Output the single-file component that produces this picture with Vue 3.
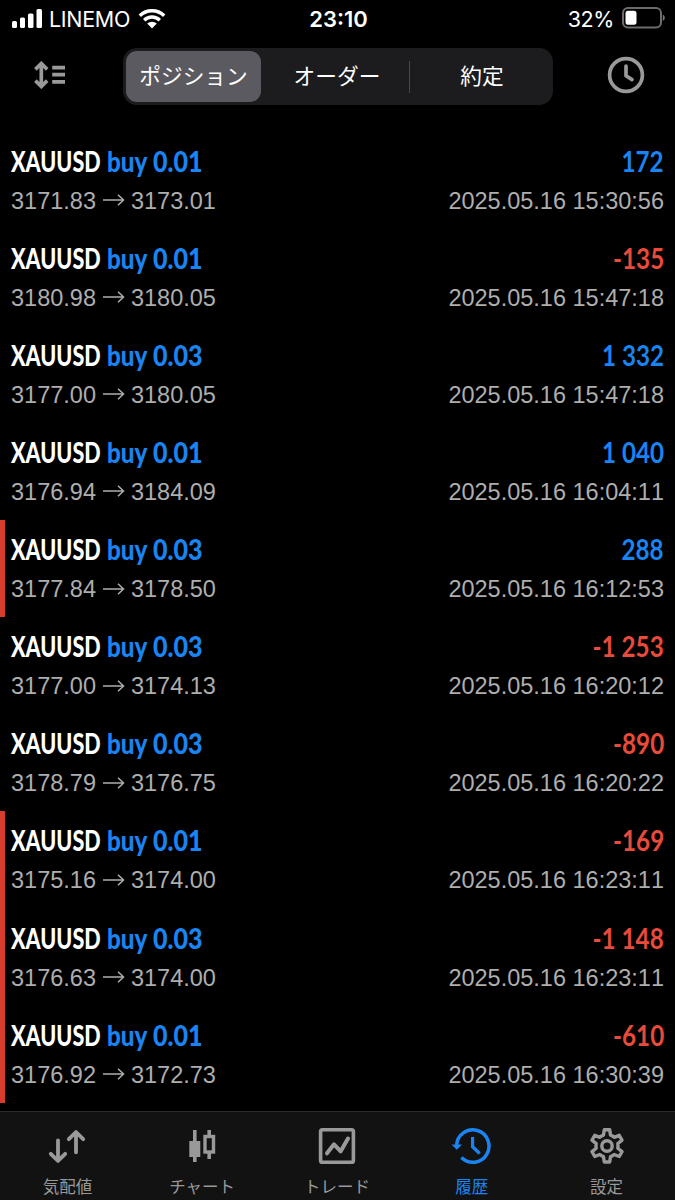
<script setup>
import { ref } from "vue";

const segments = ["ポジション", "オーダー", "約定"];
const activeSegment = ref(0);

const tabs = [
  { id: "quotes", label: "気配値" },
  { id: "chart", label: "チャート" },
  { id: "trade", label: "トレード" },
  { id: "history", label: "履歴" },
  { id: "settings", label: "設定" },
];
const activeTab = ref("history");

const positions = [
  { volume: "0.01", open: "3171.83", close: "3173.01", profit: "172", time: "15:30:56" },
  { volume: "0.01", open: "3180.98", close: "3180.05", profit: "-135", time: "15:47:18" },
  { volume: "0.03", open: "3177.00", close: "3180.05", profit: "1 332", time: "15:47:18" },
  { volume: "0.01", open: "3176.94", close: "3184.09", profit: "1 040", time: "16:04:11" },
  { volume: "0.03", open: "3177.84", close: "3178.50", profit: "288", time: "16:12:53", marked: true },
  { volume: "0.03", open: "3177.00", close: "3174.13", profit: "-1 253", time: "16:20:12" },
  { volume: "0.03", open: "3178.79", close: "3176.75", profit: "-890", time: "16:20:22" },
  { volume: "0.01", open: "3175.16", close: "3174.00", profit: "-169", time: "16:23:11", marked: true },
  { volume: "0.03", open: "3176.63", close: "3174.00", profit: "-1 148", time: "16:23:11", marked: true },
  { volume: "0.01", open: "3176.92", close: "3172.73", profit: "-610", time: "16:30:39", marked: true },
];
</script>

<template>
  <div class="app">
    <header class="status">
      <div class="status-left">
        <svg class="signal" width="30" height="19" viewBox="0 0 30 19">
          <rect x="0" y="12" width="5" height="7" rx="1.5" />
          <rect x="8" y="8.5" width="5" height="10.5" rx="1.5" />
          <rect x="16" y="4.5" width="5.5" height="14.5" rx="1.5" />
          <rect x="24.5" y="0" width="5.5" height="19" rx="1.5" />
        </svg>
        <span class="carrier">LINEMO</span>
        <svg class="wifi" width="28" height="20" viewBox="0 0 28 20">
          <path d="M1.8 6.8a17.4 17.4 0 0 1 24.4 0M6.2 11.2a11.2 11.2 0 0 1 15.6 0" />
          <path class="wifi-dot" d="M9.2 14.6a7 7 0 0 1 9.6 0L14 19.4z" />
        </svg>
      </div>
      <span class="clock">23:10</span>
      <div class="status-right">
        <span class="percent">32%</span>
        <svg class="battery" width="43" height="22" viewBox="0 0 43 22">
          <rect x="1" y="1" width="38" height="19.5" rx="5" class="battery-shell" />
          <rect x="3.5" y="3.8" width="11" height="14" rx="2.5" fill="#fff" />
          <path d="M40.8 7.5q2 1 2 3.3t-2 3.3z" fill="#777779" />
        </svg>
      </div>
    </header>

    <nav class="toolbar">
      <svg class="sort" width="32" height="28" viewBox="0 0 32 28">
        <path d="M7.3 3v22M1.4 8.4l5.9-5.9 5.9 5.9M1.4 19.6l5.9 5.9 5.9-5.9M18.2 6.7H31M18.2 13.7H31M18.2 20.8H31" />
      </svg>
      <div class="segmented">
        <button
          v-for="(segment, i) in segments"
          :key="segment"
          class="segment"
          :class="{ active: activeSegment === i }"
          @click="activeSegment = i"
        >
          {{ segment }}
        </button>
      </div>
      <svg class="period" width="38" height="38" viewBox="0 0 38 38">
        <circle cx="19" cy="19" r="16.4" />
        <path d="M19 10.2v9.6l6 3.8" />
      </svg>
    </nav>

    <main class="list">
      <div
        v-for="(item, i) in positions"
        :key="i"
        class="row"
        :class="{ marked: item.marked }"
      >
        <div class="row-main">
          <span class="symbol"><b>XAUUSD</b></span>
          <span class="side"><b>buy</b></span>
          <span class="volume"><b>{{ item.volume }}</b></span>
          <span class="profit" :class="{ loss: item.profit.startsWith('-') }">{{ item.profit }}</span>
        </div>
        <div class="row-sub">
          <span>{{ item.open }}</span>
          <svg class="arrow" width="22" height="14" viewBox="0 0 22 14">
            <path d="M0 7h20.500M15 1.800l5.500 5.200-5.500 5.200" />
          </svg>
          <span>{{ item.close }}</span>
          <span class="time">2025.05.16 {{ item.time }}</span>
        </div>
      </div>
    </main>

    <footer class="tabs">
      <div
        v-for="tab in tabs"
        :key="tab.id"
        class="tab"
        :class="{ active: activeTab === tab.id }"
        @click="activeTab = tab.id"
      >
        <svg class="tab-icon" width="44" height="40" viewBox="0 0 44 40">
          <g v-if="tab.id === 'quotes'" stroke-width="3.8" stroke-linecap="round" stroke-linejoin="round">
            <path d="M13 13.5v20M5.8 26.8l7.2 7.1 7.2-7.1M31 25.3V5.5M23.8 12.2L31 5l7.2 7.2" />
          </g>
          <g v-else-if="tab.id === 'chart'">
            <path d="M14.8 3v32M29.2 3v6.5M29.2 26v6" stroke-width="3.6" />
            <rect x="9.3" y="14" width="11" height="16" fill="currentColor" stroke="none" />
            <rect x="25" y="9.5" width="8.5" height="15.5" stroke-width="3.4" />
          </g>
          <g v-else-if="tab.id === 'trade'" stroke-width="3.6">
            <rect x="5.6" y="2.8" width="32.8" height="32.4" rx="1.8" />
            <path d="M12 26.3l7-9 6.7 7 7.3-12.7" stroke-width="4" stroke-linecap="round" stroke-linejoin="round" />
          </g>
          <g v-else-if="tab.id === 'history'" stroke-width="3.5">
            <path d="M6.6 18.5A16.2 16.2 0 1 1 11.4 30.6" />
            <path d="M22.6 10v9.7l7 6.8" stroke-width="3.2" />
            <path d="M1.6 17.5h10.5l-5.3 5.2z" fill="currentColor" stroke="none" />
          </g>
          <g v-else stroke-width="3.4" stroke-linejoin="round">
            <path
              d="M19.3 2.8h5.4l.8 5.3q2 .7 3.7 2.2l5-2 2.8 4.9-4.2 3.4q.5 2.3 0 4.6l4.2 3.4-2.8 4.9-5-2q-1.7 1.5-3.7 2.2l-.8 5.3h-5.4l-.8-5.3q-2-.7-3.7-2.2l-5 2-2.8-4.9 4.2-3.4q-.5-2.3 0-4.6l-4.2-3.4 2.8-4.9 5 2q1.7-1.5 3.7-2.2z"
            />
            <circle cx="22" cy="19" r="5.2" />
          </g>
        </svg>
        <span class="tab-label">{{ tab.label }}</span>
      </div>
    </footer>
  </div>
</template>

<style>
body {
  margin: 0;
  background: #000;
}
</style>

<style scoped>
.app {
  display: flex;
  flex-direction: column;
  width: 675px;
  height: 1200px;
  overflow: hidden;
  background: #000;
  color: #fff;
  font-family: "Liberation Sans", "Noto Sans CJK JP", sans-serif;
  font-kerning: none;
}

.status {
  display: grid;
  grid-template-columns: 1fr auto 1fr;
  align-items: center;
  height: 37px;
  padding: 0 10px 0 12px;
  font-family: Inter, sans-serif;
  font-size: 22px;
}

.status-left,
.status-right {
  display: flex;
  align-items: center;
}

.status-right {
  justify-content: flex-end;
}

.signal {
  margin-top: -1px;
  fill: #fff;
}

.carrier {
  width: 81px;
  margin-left: 7px;
  font-size: 21.5px;
  letter-spacing: -0.3px;
}

.wifi {
  margin-left: 8px;
  fill: none;
  stroke: #fff;
  stroke-width: 3.4;
}

.wifi-dot {
  fill: #fff;
  stroke: none;
}

.clock {
  font-size: 22px;
  font-weight: 600;
}

.percent {
  margin-right: 8px;
  font-size: 21.5px;
  letter-spacing: -0.4px;
}

.battery {
  margin-top: -2px;
}

.battery-shell {
  fill: none;
  stroke: #6c6c6e;
  stroke-width: 2;
}

.toolbar {
  display: flex;
  align-items: center;
  height: 78px;
  padding: 0 30px 0 34px;
}

.sort {
  margin-top: -3px;
  fill: none;
  stroke: #999;
  stroke-width: 3.7;
}

.segmented {
  display: flex;
  box-sizing: border-box;
  width: 430px;
  height: 57px;
  margin-left: 57px;
  padding: 3px;
  border-radius: 14px;
  background: #1c1c1f;
}

.segment {
  position: relative;
  width: 146px;
  padding: 0 0 3px;
  border: none;
  border-radius: 11px;
  background: none;
  color: #fff;
  font: 400 21.7px "Noto Sans CJK JP", sans-serif;
}

.segment:first-child {
  width: 135px;
  margin-right: 3px;
}

.segment:last-child {
  flex: 1;
  padding-left: 4px;
}

.segment.active {
  background: #5b5a60;
}

.segment:nth-child(2)::after {
  content: "";
  position: absolute;
  top: 10px;
  right: 0;
  width: 1px;
  height: 32px;
  background: #48484b;
}

.period {
  margin: -2px 0 0 auto;
  fill: none;
  stroke: #999;
  stroke-width: 3.7;
  stroke-linecap: round;
  stroke-linejoin: round;
}

.list {
  padding-top: 16.5px;
}

.row {
  box-sizing: border-box;
  height: 97.15px;
  padding: 12px 11px 0 6px;
  border-left: 5px solid transparent;
}

.row.marked {
  border-left-color: #d83c2c;
}

.row-main {
  display: flex;
  height: 34px;
  color: #1a84f2;
  font: 700 28.5px/34px Lato, sans-serif;
  white-space: nowrap;
}

/* Condensed lettering: natural glyphs squeezed horizontally */
.row-main b {
  display: inline-block;
  transform: scaleX(0.755);
  transform-origin: left;
}

.symbol {
  width: 96px;
  color: #fff;
}

.side {
  width: 46px;
}

.side b {
  transform: scaleX(0.85);
}

.volume b {
  transform: scaleX(0.88);
}

.profit {
  margin-left: auto;
  transform: scaleX(0.85);
  transform-origin: right;
}

.profit.loss {
  color: #e84a3c;
}

.row-sub {
  display: flex;
  align-items: center;
  height: 28px;
  margin-top: 9px;
  color: #aeaeae;
  font-size: 23.5px;
  line-height: 28px;
}

.arrow {
  margin: -1px 6px 0 7px;
  fill: none;
  stroke: #aeaeae;
  stroke-width: 1.5;
}

.time {
  margin-left: auto;
}

.tabs {
  display: flex;
  box-sizing: border-box;
  height: 89px;
  margin-top: auto;
  padding-right: 1px;
  border-top: 1px solid #2b2b2b;
  background: #121212;
  color: #999;
}

.tab {
  display: flex;
  flex: 1;
  flex-direction: column;
  align-items: center;
  padding-top: 15px;
}

.tab.active {
  color: #1a84f2;
}

.tab-icon {
  fill: none;
  stroke: currentColor;
}

.tab-label {
  margin-top: 7px;
  font: 400 16.5px/24px "Noto Sans CJK JP", sans-serif;
}
</style>
